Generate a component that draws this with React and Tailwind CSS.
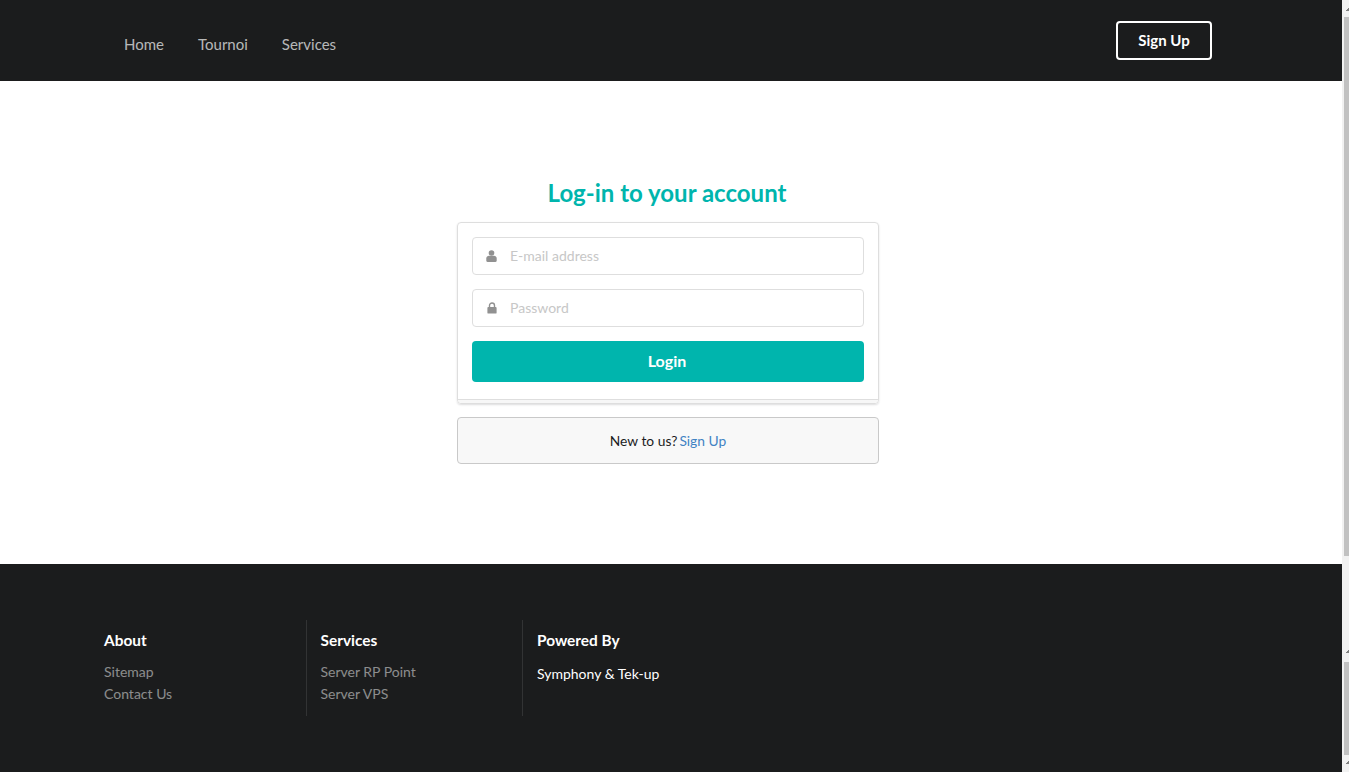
const footerColumns = [
  { title: 'Services', links: ['Server RP Point', 'Server VPS'] },
];

function FooterLinks({ title, links, className }) {
  return (
    <div className={className}>
      <h4 className="text-[15.4px] font-bold leading-[18px] text-white">{title}</h4>
      <div className="mt-[12px] flex flex-col text-[14px] leading-[22px] text-[#ffffff80]">
        {links.map((link) => (
          <a key={link} href="#">{link}</a>
        ))}
      </div>
    </div>
  );
}

function UserIcon() {
  return (
    <svg width="11" height="12" viewBox="0 0 11 12" fill="currentColor">
      <circle cx="5.5" cy="3" r="2.8" />
      <path d="M0.3 10.8V8.4C0.3 6.9 1.6 5.8 3 5.8H8C9.4 5.8 10.7 6.9 10.7 8.4V10.8C10.7 11.5 10.2 12 9.5 12H1.5C0.8 12 0.3 11.5 0.3 10.8Z" />
    </svg>
  );
}

function LockIcon() {
  return (
    <svg width="10" height="12" viewBox="0 0 10 12" fill="currentColor">
      <path d="M2.5 5.5V3.5a2.5 2.5 0 0 1 5 0V5.5" fill="none" stroke="currentColor" strokeWidth="1.4" />
      <rect x="0.4" y="5" width="9.2" height="6.6" rx="0.9" />
    </svg>
  );
}

function Field({ icon, placeholder, type }) {
  return (
    <div className="flex h-[38px] items-center rounded-[4px] border border-[#dedede] bg-white">
      <span className="flex w-[37px] justify-center text-[#919191]">{icon}</span>
      <input
        type={type}
        placeholder={placeholder}
        className="min-w-0 flex-1 bg-transparent pb-[2px] text-[14px] outline-none placeholder:text-[#c7c7c7]"
      />
    </div>
  );
}

function ScrollArrow() {
  return (
    <svg width="3" height="3" viewBox="0 0 3 3" className="ml-auto block">
      <path d="M0 3V2H1V1H2V0H3V3Z" fill="#808080" />
    </svg>
  );
}

export default function App() {
  return (
    <div className="flex h-[772px] overflow-hidden bg-white font-['Lato',sans-serif] text-[14px] text-[#1b1c1d]">
      <div className="flex min-w-0 flex-1 flex-col">
        {/* top menu */}
        <header className="flex h-[81px] items-center justify-between bg-[#1b1c1d] pl-[124px] pr-[130px]">
          <nav className="flex gap-[34px] pt-[8px] text-[15px] text-[#ffffffb3]">
            <a href="#">Home</a>
            <a href="#">Tournoi</a>
            <a href="#">Services</a>
          </nav>
          <button className="h-[39px] w-[96px] rounded-[4px] border-2 border-white text-[15px] font-bold text-white">
            Sign Up
          </button>
        </header>

        {/* login */}
        <main className="flex h-[483px] flex-col items-center bg-white pr-[6px] pt-[96px]">
          <div className="w-[422px]">
            <h2 className="pr-[2px] text-center text-[24px] font-bold leading-[32px] text-[#00b5ad]">
              Log-in to your account
            </h2>
            <form className="mt-[13px] flex h-[182px] flex-col rounded-[4px] border border-[#dedede] shadow-[0_1px_2px_rgba(34,36,38,0.15)]">
              <div className="flex flex-1 flex-col p-[14px]">
                <Field icon={<UserIcon />} placeholder="E-mail address" type="text" />
                <div className="mt-[14px]">
                  <Field icon={<LockIcon />} placeholder="Password" type="password" />
                </div>
                <button type="button" className="mt-[14px] h-[41px] rounded-[4px] bg-[#00b5ad] pb-[2px] pr-[2px] text-[16px] font-bold text-white">
                  Login
                </button>
              </div>
              <div className="h-[4px] rounded-b-[4px] border-t border-[#dedede] bg-[#f7f7f7]" />
            </form>
            <div className="mt-[13px] flex h-[47px] items-center justify-center gap-[2px] rounded-[4px] border border-[#c9c9c9] bg-[#f8f8f8] pt-[1px] text-[13.8px]">
              New to us? <a href="#" className="text-[#4183c4]">Sign Up</a>
            </div>
          </div>
        </main>

        {/* footer */}
        <footer className="flex-1 bg-[#1b1c1d] pl-[104px] pt-[56px]">
          <div className="flex h-[96px]">
            <FooterLinks title="About" links={['Sitemap', 'Contact Us']} className="w-[202px] pt-[11px]" />
            {footerColumns.map((col) => (
              <FooterLinks
                key={col.title}
                title={col.title}
                links={col.links}
                className="w-[216px] border-l border-[#ffffff1a] pl-[13.5px] pt-[11px]"
              />
            ))}
            <div className="border-l border-[#ffffff1a] pl-[14px] pt-[11px]">
              <h4 className="text-[15.4px] font-bold leading-[18px] text-white">Powered By</h4>
              <p className="mt-[14px] text-[14px] leading-[22px] text-white">Symphony &amp; Tek-up</p>
            </div>
          </div>
        </footer>
      </div>

      {/* browser scrollbars */}
      <div className="flex w-[7px] flex-col bg-[#f1f1f1]">
        <div className="h-[17px] pt-[8px]"><ScrollArrow /></div>
        <div className="ml-[2px] h-[539px] bg-[#c1c1c1]" />
        <div className="h-[106px] pt-[94px]"><ScrollArrow /></div>
        <div className="ml-[2px] h-[93px] bg-[#c1c1c1]" />
        <div className="pt-[6px]"><ScrollArrow /></div>
      </div>
    </div>
  );
}
